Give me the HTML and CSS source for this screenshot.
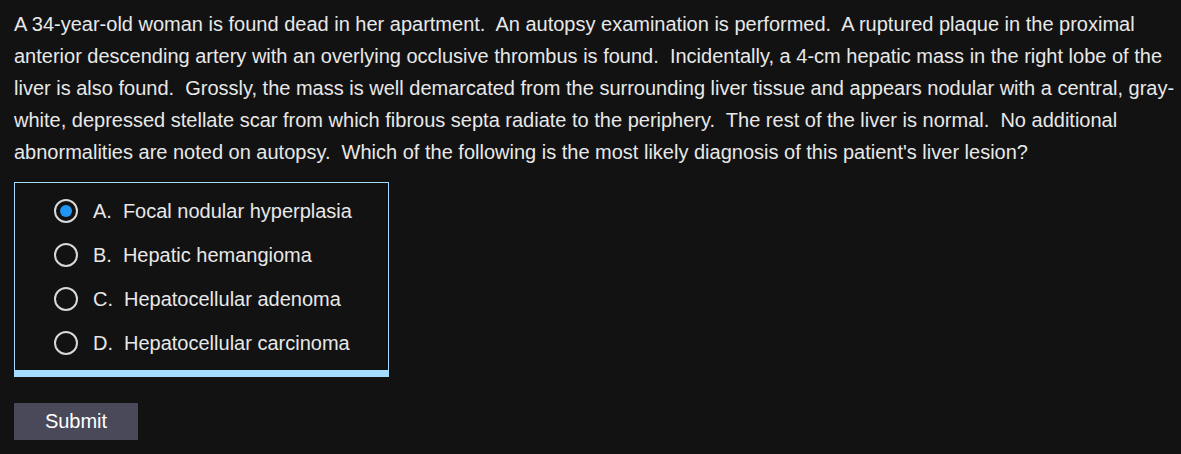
FILE: index.html
```html
<!DOCTYPE html>
<html>
<head>
<meta charset="utf-8">
<link rel="stylesheet" href="styles.css">
</head>
<body>
<div class="page">
  <p class="stem">A 34-year-old woman is found dead in her apartment.&nbsp; An autopsy examination is performed.&nbsp; A ruptured plaque in the proximal anterior descending artery with an overlying occlusive thrombus is found.&nbsp; Incidentally, a 4-cm hepatic mass in the right lobe of the liver is also found.&nbsp; Grossly, the mass is well demarcated from the surrounding liver tissue and appears nodular with a central, gray-white, depressed stellate scar from which fibrous septa radiate to the periphery.&nbsp; The rest of the liver is normal.&nbsp; No additional abnormalities are noted on autopsy.&nbsp; Which of the following is the most likely diagnosis of this patient's liver lesion?</p>
  <div class="choices">
    <label class="choice"><span class="radio checked"></span><span class="letter">A.</span><span>Focal nodular hyperplasia</span></label>
    <label class="choice"><span class="radio"></span><span class="letter">B.</span><span>Hepatic hemangioma</span></label>
    <label class="choice"><span class="radio"></span><span class="letter">C.</span><span>Hepatocellular adenoma</span></label>
    <label class="choice"><span class="radio"></span><span class="letter">D.</span><span>Hepatocellular carcinoma</span></label>
  </div>
  <button class="submit">Submit</button>
</div>
</body>
</html>
```

FILE: styles.css
```css
html, body {
  margin: 0;
  padding: 0;
  background: #121212;
}
.page {
  padding: 8px 4px 0 14px;
  font-family: "Liberation Sans", Arial, sans-serif;
  color: #e8e8e8;
  font-size: 20px;
}
.stem {
  margin: 0;
  line-height: 32px;
}
.choices {
  margin-top: 14px;
  width: 373px;
  border: 1px solid #a3dcff;
  border-bottom: 7px solid #a3dcff;
  padding: 6px 0 5px 0;
  display: flex;
  flex-direction: column;
}
.choice {
  height: 44px;
  display: flex;
  align-items: center;
  padding-left: 39px;
}
.radio {
  width: 20px;
  height: 20px;
  border: 2px solid #d8d8d8;
  border-radius: 50%;
  position: relative;
  flex: none;
  margin-right: 15px;
}
.radio.checked::after {
  content: "";
  position: absolute;
  left: 4px;
  top: 4px;
  width: 12px;
  height: 12px;
  border-radius: 50%;
  background: #2196f3;
}
.letter {
  margin-right: 11px;
}
.submit {
  margin-top: 26px;
  width: 124px;
  height: 37px;
  background: #494959;
  border: none;
  color: #ffffff;
  font-family: "Liberation Sans", Arial, sans-serif;
  font-size: 20px;
  padding: 0;
}
```
